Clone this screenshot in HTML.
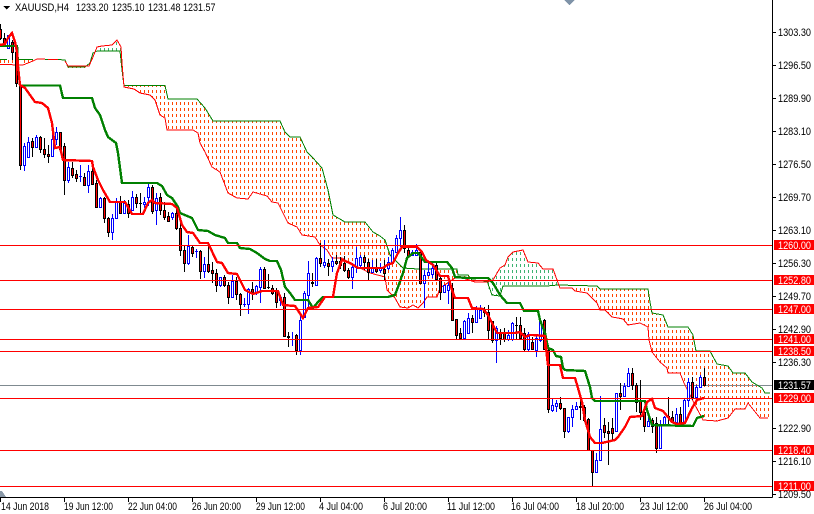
<!DOCTYPE html>
<html><head><meta charset="utf-8"><title>XAUUSD,H4</title>
<style>
html,body{margin:0;padding:0;background:#fff;width:814px;height:514px;overflow:hidden}
svg{display:block}
text{font-family:"Liberation Sans",sans-serif;font-size:11px;fill:#000}
.w{fill:#fff}
</style></head><body>
<svg width="814" height="514" viewBox="0 0 814 514" xmlns="http://www.w3.org/2000/svg">
<defs>
<pattern id="o" patternUnits="userSpaceOnUse" width="4" height="6"><rect width="1" height="3" fill="#ff4500"/></pattern>
<pattern id="g" patternUnits="userSpaceOnUse" width="4" height="6"><rect width="1" height="3" fill="#3cb371"/></pattern>
</defs>
<g shape-rendering="crispEdges">
<!-- cloud hatch -->
<path fill="url(#o)" d="M124 86L165 86 168 99 197 99 205 108 213 121 280 121 285 132 290 137 300 137 307 152 313 158 322 168 328 190 333 215 345 222 365 222 373 232 380 236 385 240 390 255 403 268 418 269 457 269 458 275 468 275 472 280 487 281 492 281 487 282 475 282 463 278 455 278 440 288 437 297 427 297 423 303 418 308 413 305 408 308 400 307 395 298 387 290 385 277 370 273 360 268 350 263 342 258 332 258 327 250 320 245 315 237 302 235 297 227 288 223 285 217 278 203 272 202 267 196 253 192 248 199 237 198 228 193 225 185 220 172 212 167 205 152 200 143 198 133 193 130 167 130 165 118 160 115 155 100 150 95 140 93 134 89z"/>
<path fill="url(#o)" d="M558 285L597 286 600 289 648 289 650 302 652 313 663 315 668 327 688 327 693 335 696 351 710 352 717 364 728 366 733 373 745 373 752 382 762 388 765 393 770 393 770 418 760 418 748 403 745 409 735 409 728 418 717 421 703 420 695 405 684 383 680 373 668 373 667 368 660 362 652 352 649 340 648 327 640 323 628 325 623 319 618 318 612 317 605 310 600 310 597 303 587 293 575 291 572 288 560 288z"/>
<path fill="url(#o)" d="M0 59H20V64H0zM23 65L33 61V59H23zM68 65H89L85 68H68z"/>
<path fill="url(#g)" d="M97 47L102 46 112 45 117 40 121 47 121 51 97 51zM490 281L500 268 505 265 508 257 513 252 523 250 528 262 538 263 543 269 553 269 557 280 558 285 503 286 500 296 492 295 485 282z"/>
<!-- grey bid line -->
<path d="M0 385.5H772" stroke="#7f8a90" fill="none"/>
<!-- thin spans -->
<g fill="none">
<path stroke="#008000" d="M0 59.5H7M18 59.5H33M45 59.5H58L65 60 68 67H85L90 63 93 53 97 51H120L122 70 124 85.500H165L168 99H197L205 108 213 121H280L285 132 290 137H300L307 152 313 158 322 168 328 190 333 215 345 222H365L373 232 380 236 385 240 390 255 403 268 418 269H457L458 275H468L472 280 487 281 492 295 500 296 503 286H547L558 285 597 286 600 289H648L650 302 652 313 663 315 668 327H688L693 335 696 351H710L717 364 728 366 733 373H745L752 382 762 388 765 393H770"/>
<path stroke="#ff0000" d="M0 64.5H8L17 65 23 65 33 61 37 59H45M48 59.5H58M65 61L68 66H89L93 57 97 47 102 46 112 45 117 40 121 47 122 63 124 87 134 89 140 93 150 95 155 100 160 115 165 118 167 130H193L198 133 200 143 205 152 212 167 220 172 225 185 228 193 237 198 248 199 253 192 267 196 272 202 278 203 285 217 288 223 297 227 302 235 315 237 320 245 327 250 332 258H342L350 263 360 268 370 273 385 277 387 290 395 298 400 307 408 308 413 305 418 308 423 303 427 297H437L440 288 455 278H463L475 282H487L493 280 500 268 505 265 508 257 513 252 523 250 528 262 538 263 543 269H553L557 280 560 288H572L575 291 587 293 597 303 600 310H605L612 317 618 318 623 319 628 325 640 323 648 327 649 340 652 352 660 362 667 368 668 373H680L684 383 695 405 703 420 717 421 728 418 735 409H745L748 403 760 418H768"/>
</g>
<!-- wicks black -->
<path fill="none" stroke="#000" d="M0.5 24V40M4.5 33V45M12.5 40V60M16.5 45V87M20.5 83V170M32.5 138V157M40.5 136V153M44.5 138V158M48.5 145V163M60.5 132V153M64.5 143V195M72.5 162V178M76.5 170V182M84.5 173V185M92.5 165V185M96.5 180V208M104.5 197V223M108.5 217V237M120.5 196V213M128.5 200V218M136.5 194V208M140.5 193V213M152.5 185V214M160.5 193V215M164.5 202V220M168.5 212V222M176.5 203V230M180.5 220V256M184.5 245V272M192.5 245V257M200.5 250V279M208.5 245V273M212.5 262V283M216.5 269V292M224.5 275V287M228.5 282V304M236.5 277V300M240.5 293V316M252.5 282V300M264.5 267V289M268.5 274V289M272.5 285V295M276.5 288V308M284.5 293V337M288.5 332V347M296.5 334V355M312.5 273V287M320.5 243V267M328.5 259V276M336.5 255V265M340.5 257V269M344.5 256V272M348.5 268V279M364.5 255V270M368.5 259V280M376.5 259V273M384.5 260V280M404.5 225V253M408.5 246V258M420.5 250V283M436.5 262V280M440.5 277V300M452.5 283V321M456.5 319V339M460.5 328V340M472.5 315V333M484.5 307V317M488.5 305V340M492.5 321V343M500.5 329V345M504.5 328V342M516.5 317V340M520.5 317V340M524.5 328V352M532.5 337V350M544.5 319V350M548.5 345V413M560.5 397V410M564.5 408V438M580.5 398V420M584.5 405V422M588.5 418V450M592.5 450V486M604.5 418V438M608.5 422V465M612.5 418V440M620.5 383V410M632.5 368V390M636.5 383V412M640.5 380V420M644.5 408V432M652.5 418V433M656.5 417V453M668.5 397V425M672.5 411V423M680.5 407V427M692.5 377V400M704.5 368V385"/>
<!-- wicks blue -->
<path fill="none" stroke="#0000ff" d="M8.5 35V48M24.5 143V171M28.5 137V157M36.5 135V147M52.5 135V156M56.5 127V145M68.5 162V183M80.5 165V182M88.5 165V193M100.5 197V208M112.5 214V240M116.5 198V218M124.5 200V213M132.5 191V210M144.5 197V208M148.5 183V206M156.5 193V225M172.5 212V220M188.5 235V265M196.5 249V258M204.5 257V278M220.5 277V287M232.5 275V297M244.5 298V307M248.5 288V314M256.5 285V295M260.5 267V303M280.5 295V306M292.5 332V346M300.5 316V355M304.5 291V318M308.5 261V310M316.5 257V285M324.5 240V268M332.5 257V272M352.5 263V289M356.5 247V273M360.5 255V267M372.5 260V272M380.5 263V273M388.5 257V270M392.5 248V263M396.5 235V253M400.5 217V247M412.5 250V256M416.5 244V256M424.5 270V308M428.5 262V275M432.5 262V278M444.5 285V293M448.5 282V304M464.5 320V340M468.5 313V333M476.5 306V323M480.5 305V318M496.5 326V363M508.5 330V341M512.5 322V341M528.5 332V352M536.5 336V357M540.5 318V342M552.5 398V412M556.5 400V412M568.5 417V433M572.5 405V427M576.5 402V410M596.5 453V473M600.5 396V460M616.5 393V431M624.5 383V397M628.5 368V387M648.5 412V427M660.5 420V449M664.5 416V426M676.5 408V423M684.5 398V424M688.5 378V407M696.5 385V398M700.5 375V388"/>
<!-- doji dashes -->
<path fill="none" stroke="#0000ff" d="M79 176.5h3M195 251.5h3M243 304.5h3"/>
<path fill="none" stroke="#000" d="M139 203.5h3M267 287.5h3M515 325.5h3"/>
<!-- bull bodies -->
<path fill="#fff" stroke="#0000ff" d="M7.5 35.5h2v13h-2zM23.5 146.5h2v19h-2zM27.5 142.5h2v15h-2zM35.5 137.5h2v10h-2zM51.5 139.5h2v17h-2zM55.5 132.5h2v7h-2zM67.5 167.5h2v13h-2zM87.5 171.5h2v14h-2zM99.5 198.5h2v9h-2zM111.5 218.5h2v14h-2zM115.5 202.5h2v16h-2zM123.5 203.5h2v10h-2zM131.5 197.5h2v13h-2zM143.5 202.5h2v2h-2zM147.5 187.5h2v10h-2zM155.5 198.5h2v12h-2zM171.5 213.5h2v4h-2zM187.5 246.5h2v17h-2zM203.5 264.5h2v7h-2zM219.5 277.5h2v8h-2zM231.5 281.5h2v16h-2zM247.5 289.5h2v15h-2zM255.5 286.5h2v6h-2zM259.5 269.5h2v18h-2zM279.5 297.5h2v3h-2zM299.5 320.5h2v30h-2zM303.5 293.5h2v24h-2zM307.5 273.5h2v22h-2zM315.5 258.5h2v27h-2zM323.5 262.5h2v3h-2zM331.5 261.5h2v5h-2zM351.5 267.5h2v10h-2zM355.5 258.5h2v9h-2zM359.5 257.5h2v8h-2zM371.5 268.5h2v4h-2zM379.5 268.5h2v2h-2zM387.5 262.5h2v6h-2zM391.5 250.5h2v12h-2zM395.5 238.5h2v14h-2zM399.5 230.5h2v8h-2zM411.5 252.5h2v3h-2zM415.5 250.5h2v5h-2zM423.5 275.5h2v8h-2zM427.5 272.5h2v3h-2zM431.5 268.5h2v6h-2zM443.5 285.5h2v7h-2zM447.5 285.5h2v5h-2zM463.5 321.5h2v17h-2zM467.5 318.5h2v15h-2zM475.5 309.5h2v13h-2zM479.5 310.5h2v8h-2zM495.5 328.5h2v12h-2zM507.5 335.5h2v4h-2zM511.5 323.5h2v16h-2zM527.5 334.5h2v15h-2zM535.5 338.5h2v12h-2zM539.5 321.5h2v19h-2zM551.5 405.5h2v5h-2zM555.5 403.5h2v3h-2zM567.5 417.5h2v14h-2zM571.5 409.5h2v8h-2zM575.5 406.5h2v3h-2zM595.5 460.5h2v12h-2zM599.5 429.5h2v31h-2zM615.5 393.5h2v38h-2zM623.5 386.5h2v10h-2zM627.5 373.5h2v13h-2zM647.5 421.5h2v5h-2zM659.5 425.5h2v23h-2zM663.5 417.5h2v8h-2zM675.5 414.5h2v8h-2zM683.5 400.5h2v23h-2zM687.5 382.5h2v18h-2zM695.5 387.5h2v10h-2zM699.5 377.5h2v10h-2z"/>
<!-- bear bodies -->
<path fill="#ff0000" stroke="#000" d="M-.5 29.5h2v9h-2zM3.5 38.5h2v5h-2zM11.5 42.5h2v10h-2zM15.5 52.5h2v31h-2zM19.5 85.5h2v80h-2zM31.5 141.5h2v6h-2zM39.5 137.5h2v12h-2zM43.5 149.5h2v5h-2zM47.5 154.5h2v2h-2zM59.5 132.5h2v17h-2zM63.5 146.5h2v34h-2zM71.5 168.5h2v7h-2zM75.5 174.5h2v4h-2zM83.5 177.5h2v8h-2zM91.5 171.5h2v13h-2zM95.5 183.5h2v24h-2zM103.5 198.5h2v20h-2zM107.5 218.5h2v14h-2zM119.5 202.5h2v11h-2zM127.5 204.5h2v9h-2zM135.5 197.5h2v6h-2zM151.5 187.5h2v24h-2zM159.5 197.5h2v13h-2zM163.5 210.5h2v7h-2zM167.5 216.5h2v5h-2zM175.5 213.5h2v15h-2zM179.5 228.5h2v22h-2zM183.5 250.5h2v13h-2zM191.5 247.5h2v6h-2zM199.5 251.5h2v20h-2zM207.5 264.5h2v7h-2zM211.5 270.5h2v3h-2zM215.5 273.5h2v12h-2zM223.5 277.5h2v8h-2zM227.5 285.5h2v12h-2zM235.5 281.5h2v13h-2zM239.5 294.5h2v10h-2zM251.5 289.5h2v3h-2zM263.5 269.5h2v19h-2zM271.5 288.5h2v5h-2zM275.5 291.5h2v11h-2zM283.5 297.5h2v39h-2zM287.5 336.5h2v1h-2zM295.5 335.5h2v15h-2zM311.5 282.5h2v1h-2zM319.5 258.5h2v5h-2zM327.5 263.5h2v3h-2zM335.5 261.5h2v2h-2zM339.5 261.5h2v4h-2zM343.5 263.5h2v7h-2zM347.5 270.5h2v7h-2zM363.5 257.5h2v5h-2zM367.5 262.5h2v10h-2zM375.5 268.5h2v3h-2zM383.5 269.5h2v4h-2zM403.5 230.5h2v18h-2zM407.5 250.5h2v6h-2zM419.5 252.5h2v31h-2zM435.5 265.5h2v14h-2zM439.5 278.5h2v14h-2zM451.5 288.5h2v32h-2zM455.5 319.5h2v16h-2zM459.5 333.5h2v5h-2zM471.5 318.5h2v4h-2zM483.5 310.5h2v2h-2zM487.5 312.5h2v18h-2zM491.5 321.5h2v19h-2zM499.5 333.5h2v5h-2zM503.5 333.5h2v6h-2zM519.5 325.5h2v13h-2zM523.5 333.5h2v16h-2zM531.5 342.5h2v7h-2zM543.5 320.5h2v29h-2zM547.5 350.5h2v59h-2zM559.5 403.5h2v5h-2zM563.5 408.5h2v23h-2zM579.5 406.5h2v1h-2zM583.5 407.5h2v13h-2zM587.5 419.5h2v31h-2zM591.5 450.5h2v22h-2zM603.5 425.5h2v7h-2zM607.5 431.5h2v2h-2zM611.5 428.5h2v5h-2zM619.5 393.5h2v3h-2zM631.5 373.5h2v12h-2zM635.5 385.5h2v17h-2zM639.5 401.5h2v11h-2zM643.5 412.5h2v14h-2zM651.5 420.5h2v6h-2zM655.5 423.5h2v25h-2zM667.5 416.5h2v1h-2zM671.5 417.5h2v5h-2zM679.5 414.5h2v9h-2zM691.5 382.5h2v15h-2zM703.5 377.5h2v8h-2z"/>
<!-- kijun -->
<polyline fill="none" stroke="#008000" stroke-width="2.4" points="0,46 17,46 18,66 20,85.5 60,85.5 63,98 92,98 95,108 100,115 105,130 108,137 116,143 118,153 122,183 157,183 162,186 167,195 172,198 178,207 180,213 192,218 198,230 208,231 215,235 225,238 228,243 237,243 240,248 250,249 257,253 265,259 270,261 277,261 281,270 285,287 290,293 295,300 308,300 313,308 318,302 323,297 388,297 395,295 398,287 403,273 407,258 413,253 418,253 422,258 425,262 447,262 452,268 455,277 467,278 488,278 493,283 500,295 507,303 520,303 524,311 538,311 540,320 545,333 548,348 553,350 556,356 561,357 563,368 565,370 585,371 590,387 592,398 595,401 645,401 647,410 652,425 693,426 697,418 704,416"/>
<!-- tenkan -->
<polyline fill="none" stroke="#ff0000" stroke-width="2.4" points="0,45 5,44 8,38 12,33 15,42 17,52 18,67 20,85 25,88 35,102 42,103 48,108 52,123 55,148 60,147 63,160 92,161 93,167 98,180 103,190 110,202 125,202 132,214 143,214 148,203 152,200 155,203 172,204 177,208 182,225 187,232 193,233 200,243 208,243 217,262 222,263 228,273 237,274 245,290 253,294 262,291 278,291 283,305 295,306 303,318 308,308 318,307 325,297 333,297 337,273 342,260 350,263 358,268 383,268 387,265 393,263 398,253 402,247 417,247 422,252 426,260 433,265 440,276 448,276 452,290 455,298 468,298 472,308 483,309 488,315 492,323 497,333 515,333 520,332 525,337 530,335 533,335 545,336 547,357 548,365 560,365 563,378 575,378 578,388 582,402 585,420 590,437 595,443 602,443 615,440 618,437 625,427 630,417 642,416 647,402 652,399 655,408 663,411 672,422 677,424 685,423 692,408 697,400 704,398"/>
<!-- horizontal levels -->
<path fill="none" stroke="#ff0000" d="M0 245.500H772M0 280.500H772M0 309.500H772M0 339.500H772M0 351.500H772M0 398.500H772M0 450.500H772M0 486.500H772"/>
<!-- axes -->
<path fill="none" stroke="#000" d="M772.500 0V497.500M0 497.500H772.500"/>
<path fill="none" stroke="#000" d="M773 32.500h3M773 65.500h3M773 98.500h3M773 131.500h3M773 164.500h3M773 197.500h3M773 230.500h3M773 263.500h3M773 296.500h3M773 329.500h3M773 362.500h3M773 428.500h3M773 461.500h3M773 494.500h3M0.500 498v4M64.500 498v4M128.500 498v4M192.500 498v4M256.500 498v4M320.500 498v4M384.500 498v4M448.500 498v4M512.500 498v4M576.500 498v4M640.500 498v4M704.500 498v4"/>
<!-- tags -->
<path fill="#ff0000" d="M774 240h40v10h-40zM774 275h40v10h-40zM774 304h40v10h-40zM774 334h40v10h-40zM774 346h40v10h-40zM774 393h40v10h-40zM774 445h40v10h-40zM774 481h40v10h-40z"/>
<path fill="#000" d="M774 380h40v10h-40z"/>
<path fill="#000" d="M3 6h7l-3.500 3.500z"/>
<path fill="#7f93a8" d="M564 0h11l-5.500 5z"/>
<path fill="#8a99a8" d="M0 491v6h6l-4-6z"/>
</g>
<!-- header text -->
<text x="15" y="11" textLength="54" lengthAdjust="spacingAndGlyphs">XAUUSD,H4</text>
<text x="76" y="11" textLength="32.500" lengthAdjust="spacingAndGlyphs">1233.20</text>
<text x="112" y="11" textLength="32.500" lengthAdjust="spacingAndGlyphs">1235.10</text>
<text x="148" y="11" textLength="32.500" lengthAdjust="spacingAndGlyphs">1231.48</text>
<text x="183" y="11" textLength="32.500" lengthAdjust="spacingAndGlyphs">1231.57</text>
<!-- price labels -->
<text x="778" y="36" textLength="33" lengthAdjust="spacingAndGlyphs">1303.30</text>
<text x="778" y="69" textLength="33" lengthAdjust="spacingAndGlyphs">1296.50</text>
<text x="778" y="102" textLength="33" lengthAdjust="spacingAndGlyphs">1289.90</text>
<text x="778" y="135" textLength="33" lengthAdjust="spacingAndGlyphs">1283.10</text>
<text x="778" y="168" textLength="33" lengthAdjust="spacingAndGlyphs">1276.50</text>
<text x="778" y="201" textLength="33" lengthAdjust="spacingAndGlyphs">1269.70</text>
<text x="778" y="234" textLength="33" lengthAdjust="spacingAndGlyphs">1263.10</text>
<text x="778" y="267" textLength="33" lengthAdjust="spacingAndGlyphs">1256.30</text>
<text x="778" y="300" textLength="33" lengthAdjust="spacingAndGlyphs">1249.70</text>
<text x="778" y="333" textLength="33" lengthAdjust="spacingAndGlyphs">1242.90</text>
<text x="778" y="366" textLength="33" lengthAdjust="spacingAndGlyphs">1236.30</text>
<text x="778" y="432" textLength="33" lengthAdjust="spacingAndGlyphs">1222.90</text>
<text x="778" y="465" textLength="33" lengthAdjust="spacingAndGlyphs">1216.10</text>
<text x="778" y="498" textLength="33" lengthAdjust="spacingAndGlyphs">1209.50</text>
<!-- tag text -->
<text class="w" x="778" y="249" textLength="33" lengthAdjust="spacingAndGlyphs">1260.00</text>
<text class="w" x="778" y="284" textLength="33" lengthAdjust="spacingAndGlyphs">1252.80</text>
<text class="w" x="778" y="313" textLength="33" lengthAdjust="spacingAndGlyphs">1247.00</text>
<text class="w" x="778" y="343" textLength="33" lengthAdjust="spacingAndGlyphs">1241.00</text>
<text class="w" x="778" y="355" textLength="33" lengthAdjust="spacingAndGlyphs">1238.50</text>
<text class="w" x="778" y="389" textLength="33" lengthAdjust="spacingAndGlyphs">1231.57</text>
<text class="w" x="778" y="402" textLength="33" lengthAdjust="spacingAndGlyphs">1229.00</text>
<text class="w" x="778" y="454" textLength="33" lengthAdjust="spacingAndGlyphs">1218.40</text>
<text class="w" x="778" y="490" textLength="33" lengthAdjust="spacingAndGlyphs">1211.00</text>
<!-- time labels -->
<text x="1" y="510" textLength="48" lengthAdjust="spacingAndGlyphs">14 Jun 2018</text>
<text x="64" y="510" textLength="49" lengthAdjust="spacingAndGlyphs">19 Jun 12:00</text>
<text x="128" y="510" textLength="49" lengthAdjust="spacingAndGlyphs">22 Jun 04:00</text>
<text x="192" y="510" textLength="49" lengthAdjust="spacingAndGlyphs">26 Jun 20:00</text>
<text x="256" y="510" textLength="49" lengthAdjust="spacingAndGlyphs">29 Jun 12:00</text>
<text x="319" y="510" textLength="44" lengthAdjust="spacingAndGlyphs">4 Jul 04:00</text>
<text x="383" y="510" textLength="44" lengthAdjust="spacingAndGlyphs">6 Jul 20:00</text>
<text x="447" y="510" textLength="48" lengthAdjust="spacingAndGlyphs">11 Jul 12:00</text>
<text x="511" y="510" textLength="48" lengthAdjust="spacingAndGlyphs">16 Jul 04:00</text>
<text x="576" y="510" textLength="48" lengthAdjust="spacingAndGlyphs">18 Jul 20:00</text>
<text x="640" y="510" textLength="48" lengthAdjust="spacingAndGlyphs">23 Jul 12:00</text>
<text x="704" y="510" textLength="48" lengthAdjust="spacingAndGlyphs">26 Jul 04:00</text>
</svg>
</body></html>
